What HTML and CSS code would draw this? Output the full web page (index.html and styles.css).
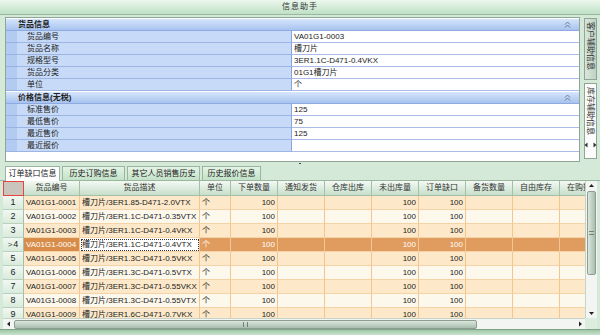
FILE: index.html
```html
<!DOCTYPE html>
<html lang="zh-CN">
<head>
    <meta charset="UTF-8">
    <title>信息助手</title>
    <link rel="stylesheet" href="styles.css">
</head>
<body>
    <div class="window">
        <div class="titlebar">信息助手</div>

        <div class="top">
            <div class="prop">
                <div class="cat">
                    <span>货品信息</span>
                    <svg class="chev" width="7" height="7" viewBox="0 0 7 7"><path d="M1 3.5L3.5 1L6 3.5M1 6.5L3.5 4L6 6.5" fill="none" stroke="#6a7a90" stroke-width="1"/></svg>
                </div>
                <div class="item"><i></i><span class="lbl">货品编号</span><span class="val">VA01G1-0003</span></div>
                <div class="item"><i></i><span class="lbl">货品名称</span><span class="val">槽刀片</span></div>
                <div class="item"><i></i><span class="lbl">规格型号</span><span class="val">3ER1.1C-D471-0.4VKX</span></div>
                <div class="item"><i></i><span class="lbl">货品分类</span><span class="val">01G1槽刀片</span></div>
                <div class="item"><i></i><span class="lbl">单位</span><span class="val">个</span></div>
                <div class="cat second">
                    <span>价格信息(无税)</span>
                    <svg class="chev" width="7" height="7" viewBox="0 0 7 7"><path d="M1 3.5L3.5 1L6 3.5M1 6.5L3.5 4L6 6.5" fill="none" stroke="#6a7a90" stroke-width="1"/></svg>
                </div>
                <div class="item"><i></i><span class="lbl">标准售价</span><span class="val">125</span></div>
                <div class="item"><i></i><span class="lbl">最低售价</span><span class="val">75</span></div>
                <div class="item"><i></i><span class="lbl">最近售价</span><span class="val">125</span></div>
                <div class="item"><i></i><span class="lbl">最近报价</span><span class="val"></span></div>
            </div>
            <div class="side">
                <div class="vtab">客户辅助信息</div>
                <div class="vtab on">
                    <span>库存辅助信息</span>
                    <svg width="7" height="16" viewBox="0 0 7 16"><path d="M1 5L3.5 2L6 5Z M1 11L3.5 14L6 11Z" fill="#333"/></svg>
                </div>
            </div>
        </div>

        <div class="splitter"><b></b></div>

        <div class="tabs">
            <div class="tab on w1">订单缺口信息</div>
            <div class="tab w2">历史订购信息</div>
            <div class="tab w3">其它人员销售历史</div>
            <div class="tab w4">历史报价信息</div>
        </div>

        <div class="grid">
            <div class="viewport">
                <table>
                    <thead>
                        <tr>
                            <th class="corner-cell"></th>
                            <th class="c-code">货品编号</th>
                            <th class="c-desc">货品描述</th>
                            <th class="c-unit">单位</th>
                            <th class="c-num">下单数量</th>
                            <th class="c-num">通知发货</th>
                            <th class="c-num">仓库出库</th>
                            <th class="c-num">未出库量</th>
                            <th class="c-num">订单缺口</th>
                            <th class="c-num">备货数量</th>
                            <th class="c-num">自由库存</th>
                            <th class="c-num">在购数量</th>
                        </tr>
                    </thead>
                    <tbody>
                        <tr class="odd">
                            <td class="rh">1</td><td>VA01G1-0001</td><td>槽刀片/3ER1.85-D471-2.0VTX</td><td>个</td>
                            <td class="n">100</td><td></td><td></td><td class="n">100</td><td class="n">100</td><td></td><td></td><td></td>
                        </tr>
                        <tr>
                            <td class="rh">2</td><td>VA01G1-0002</td><td>槽刀片/3ER1.1C-D471-0.35VTX</td><td>个</td>
                            <td class="n">100</td><td></td><td></td><td class="n">100</td><td class="n">100</td><td></td><td></td><td></td>
                        </tr>
                        <tr class="odd">
                            <td class="rh">3</td><td>VA01G1-0003</td><td>槽刀片/3ER1.1C-D471-0.4VKX</td><td>个</td>
                            <td class="n">100</td><td></td><td></td><td class="n">100</td><td class="n">100</td><td></td><td></td><td></td>
                        </tr>
                        <tr class="sel">
                            <td class="rh"><span class="mark">&gt;</span>4</td><td class="key">VA01G1-0004</td><td class="edit">槽刀片/3ER1.1C-D471-0.4VTX</td><td>个</td>
                            <td class="n">100</td><td></td><td></td><td class="n">100</td><td class="n">100</td><td></td><td></td><td></td>
                        </tr>
                        <tr class="odd">
                            <td class="rh">5</td><td>VA01G1-0005</td><td>槽刀片/3ER1.3C-D471-0.5VKX</td><td>个</td>
                            <td class="n">100</td><td></td><td></td><td class="n">100</td><td class="n">100</td><td></td><td></td><td></td>
                        </tr>
                        <tr>
                            <td class="rh">6</td><td>VA01G1-0006</td><td>槽刀片/3ER1.3C-D471-0.5VTX</td><td>个</td>
                            <td class="n">100</td><td></td><td></td><td class="n">100</td><td class="n">100</td><td></td><td></td><td></td>
                        </tr>
                        <tr class="odd">
                            <td class="rh">7</td><td>VA01G1-0007</td><td>槽刀片/3ER1.3C-D471-0.55VKX</td><td>个</td>
                            <td class="n">100</td><td></td><td></td><td class="n">100</td><td class="n">100</td><td></td><td></td><td></td>
                        </tr>
                        <tr>
                            <td class="rh">8</td><td>VA01G1-0008</td><td>槽刀片/3ER1.3C-D471-0.55VTX</td><td>个</td>
                            <td class="n">100</td><td></td><td></td><td class="n">100</td><td class="n">100</td><td></td><td></td><td></td>
                        </tr>
                        <tr class="odd">
                            <td class="rh">9</td><td>VA01G1-0009</td><td>槽刀片/3ER1.6C-D471-0.7VKX</td><td>个</td>
                            <td class="n">100</td><td></td><td></td><td class="n">100</td><td class="n">100</td><td></td><td></td><td></td>
                        </tr>
                    </tbody>
                </table>
            </div>
            <div class="vscroll">
                <svg class="arrow" width="11" height="10" viewBox="0 0 11 10"><path d="M3 6L5.5 3L8 6Z" fill="#222"/></svg>
                <div class="vthumb"><span></span></div>
                <div class="track"></div>
                <svg class="arrow" width="11" height="10" viewBox="0 0 11 10"><path d="M3 4L5.5 7L8 4Z" fill="#222"/></svg>
            </div>
            <div class="hscroll">
                <svg class="arrow" width="10" height="10" viewBox="0 0 10 10"><path d="M6 2.5L3 5L6 7.5Z" fill="#222"/></svg>
                <div class="hthumb"><span></span></div>
                <div class="track"></div>
                <svg class="arrow" width="10" height="10" viewBox="0 0 10 10"><path d="M4 2.5L7 5L4 7.5Z" fill="#222"/></svg>
            </div>
            <div class="corner"></div>
        </div>

        <div class="footer"></div>
    </div>
</body>
</html>
```

FILE: styles.css
```css
body {
    margin: 0;
    padding: 0;
    background-color: #d5e9d8;
    font-family: "Liberation Sans", "Noto Sans CJK SC", sans-serif;
    font-size: 8px;
    color: #222;
}

.window {
    width: 600px;
    height: 335px;
    display: flex;
    flex-direction: column;
    overflow: hidden;
}

/* title */
.titlebar {
    height: 14px;
    line-height: 14px;
    text-align: center;
    letter-spacing: 1px;
    color: #333;
    background: linear-gradient(#ecf7ed, #bfe0c5);
    border-bottom: 1px solid #98b89e;
}

/* property grid + side tabs */
.top {
    display: flex;
    height: 147px;
    padding-top: 2px;
    padding-left: 5px;
    box-sizing: border-box;
}

.prop {
    flex: 1;
    height: 145px;
    box-sizing: border-box;
    border: 1px solid #8ea597;
    background-color: #ffffff;
    padding-top: 1px;
}

.cat {
    height: 12px;
    line-height: 12px;
    display: flex;
    justify-content: space-between;
    align-items: center;
    padding: 0 8px 0 12px;
    font-weight: bold;
    background: linear-gradient(#d6e5fb, #a7c3ee);
    border-bottom: 1px solid #8eaae0;
    box-sizing: border-box;
}

.cat.second {
    margin-top: 1px;
}

.item {
    height: 12px;
    line-height: 11px;
    display: grid;
    grid-template-columns: 11px 275px 1fr;
}

.item i {
    background-color: #b3cbf1;
    border-bottom: 1px solid #98b3e3;
}

.item .lbl {
    background-color: #c7dbf8;
    border-bottom: 1px solid #9db5e2;
    border-right: 1px solid #8aa5db;
    padding-left: 10px;
}

.item .val {
    border-bottom: 1px solid #aabbe8;
    padding-left: 2px;
}

.side {
    width: 20px;
    padding-top: 1px;
    display: flex;
    flex-direction: column;
    align-items: center;
    gap: 3px;
}

.vtab {
    writing-mode: vertical-rl;
    text-orientation: sideways;
    width: 13px;
    box-sizing: border-box;
    border: 1px solid #8ea597;
    background: linear-gradient(90deg, #d9e6dc, #bfd2c4);
    color: #333;
    line-height: 11px;
    padding: 3px 0;
    height: 62px;
}

.vtab.on {
    height: 76px;
    background: #fbfcfb;
    display: flex;
    align-items: center;
    gap: 2px;
}

.vtab.on svg {
    transform: rotate(-90deg);
}

/* splitter */
.splitter {
    height: 3px;
    position: relative;
}

.splitter b {
    position: absolute;
    left: 299px;
    top: 1px;
    width: 2px;
    height: 1px;
    background-color: #445;
}

/* tabs */
.tabs {
    height: 16px;
    display: flex;
    align-items: flex-end;
    gap: 2px;
    padding-left: 5px;
    border-bottom: 1px solid #9ab5a0;
    box-sizing: border-box;
}

.tab {
    height: 14px;
    line-height: 13px;
    text-align: center;
    box-sizing: border-box;
    border: 1px solid #9ab5a0;
    border-bottom: none;
    background: linear-gradient(#e4f3e5, #c3e2c8);
    color: #222;
}

.tab.on {
    height: 15px;
    background: #ffffff;
    margin-bottom: -1px;
    line-height: 14px;
}

.w1 { width: 55px; }
.w2 { width: 63px; }
.w3 { width: 73px; }
.w4 { width: 59px; }

/* data grid */
.grid {
    height: 148px;
    margin: 0 3px;
    display: grid;
    grid-template-columns: 582px 12px;
    grid-template-rows: 137px 11px;
    background-color: #ffffff;
}

.viewport {
    overflow: hidden;
}

table {
    table-layout: fixed;
    width: 604px;
    border-collapse: separate;
    border-spacing: 0;
}

th, td {
    box-sizing: border-box;
    padding: 0 2px;
    white-space: nowrap;
    overflow: hidden;
    font-weight: normal;
}

th {
    height: 15px;
    line-height: 14px;
    text-align: center;
    color: #333;
    background: linear-gradient(#f3f9f3, #c7dfcb);
    border-right: 1px solid #a3bfa8;
    border-bottom: 1px solid #a3bfa8;
}

th.corner-cell {
    width: 21px;
    background: #c9c5bd;
    border: 1px solid #e5453f;
}

.c-code { width: 56px; }
.c-desc { width: 120px; }
.c-unit { width: 31px; }
.c-num { width: 47px; }

td {
    height: 14px;
    line-height: 13px;
    border-right: 1px solid #f3c68f;
    border-bottom: 1px solid #f6d3a6;
    background-color: #fdf8ec;
}

tr.odd td {
    background-color: #fde9c9;
}

td.n {
    text-align: right;
}

td.rh {
    text-align: center;
    background: linear-gradient(#f1f8f2, #d9ebdc);
    border-right: 1px solid #a3bfa8;
    border-bottom: 1px solid #b8d0bc;
    font-size: 9px;
}

tr.odd td.rh {
    background: linear-gradient(#f1f8f2, #d9ebdc);
}

.mark {
    font-size: 8px;
    margin-right: 1px;
    color: #444;
}

tr.sel td {
    background-color: #e09b5e;
    color: #ffffff;
}

tr.sel td.key {
    background-color: #d88c4a;
}

tr.sel td.edit {
    background-color: #ffffff;
    color: #222;
    outline: 1px dotted #333;
    outline-offset: -2px;
}

tr.sel td.rh {
    color: #222;
}

/* scrollbars */
.vscroll {
    display: flex;
    flex-direction: column;
    background-color: #f2f5f2;
    border-left: 1px solid #c5d4c8;
}

.vthumb {
    height: 82px;
    margin: 0 1px;
    border: 1px solid #8b9e90;
    border-radius: 2px;
    background: linear-gradient(90deg, #dce7de, #a9bcad);
    display: flex;
    align-items: center;
    justify-content: center;
}

.vthumb span {
    width: 5px;
    height: 4px;
    border-top: 1px solid #6f8274;
    border-bottom: 1px solid #6f8274;
    box-sizing: border-box;
}

.track {
    flex: 1;
}

.hscroll {
    display: flex;
    align-items: center;
    background-color: #f2f5f2;
    border-top: 1px solid #c5d4c8;
    padding-left: 1px;
}

.hthumb {
    width: 463px;
    height: 9px;
    box-sizing: border-box;
    border: 1px solid #8b9e90;
    border-radius: 2px;
    background: linear-gradient(#dce7de, #a9bcad);
    display: flex;
    align-items: center;
    justify-content: center;
}

.hthumb span {
    width: 5px;
    height: 5px;
    border-left: 1px solid #6f8274;
    border-right: 1px solid #6f8274;
    box-sizing: border-box;
}

.arrow {
    flex: none;
}

.corner {
    background-color: #dcecdf;
}

.footer {
    flex: 1;
    background: linear-gradient(#9fc7a7, #c9e3cd);
    border-top: 1px solid #7fa387;
}
```
